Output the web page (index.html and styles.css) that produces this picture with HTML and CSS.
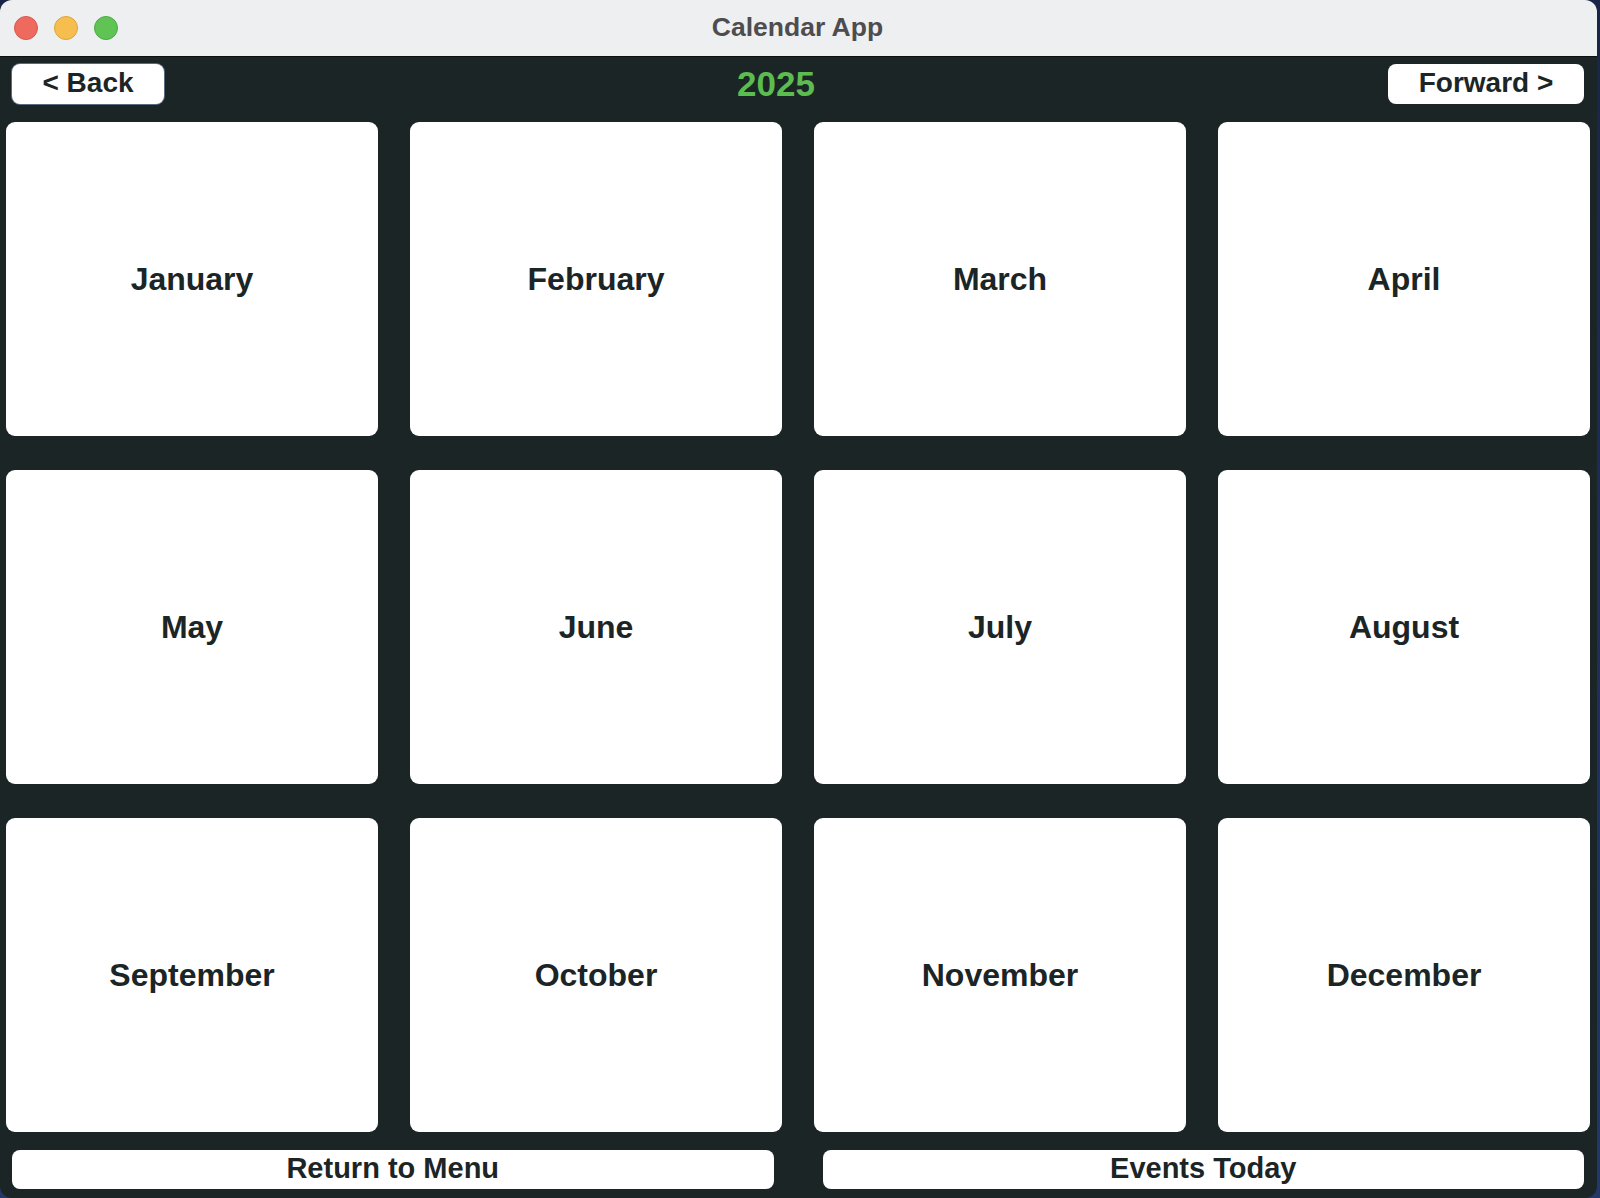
FILE: index.html
```html
<!DOCTYPE html>
<html lang="en">
<head>
<meta charset="utf-8">
<title>Calendar App</title>
<link rel="stylesheet" href="styles.css">
</head>
<body>
<div class="window">
  <div class="titlebar">
    <div class="lights">
      <span class="light red"></span>
      <span class="light yellow"></span>
      <span class="light green"></span>
    </div>
    <div class="title">Calendar App</div>
  </div>
  <div class="content">
    <div class="toolbar">
      <button class="btn back">&lt; Back</button>
      <div class="year">2025</div>
      <button class="btn forward">Forward &gt;</button>
    </div>
    <div class="months">
      <div class="month">January</div>
      <div class="month">February</div>
      <div class="month">March</div>
      <div class="month">April</div>
      <div class="month">May</div>
      <div class="month">June</div>
      <div class="month">July</div>
      <div class="month">August</div>
      <div class="month">September</div>
      <div class="month">October</div>
      <div class="month">November</div>
      <div class="month">December</div>
    </div>
    <div class="footer">
      <button class="btn wide">Return to Menu</button>
      <button class="btn wide">Events Today</button>
    </div>
  </div>
</div>
</body>
</html>
```

FILE: styles.css
```css
html, body {
  margin: 0;
  padding: 0;
}
body {
  width: 1600px;
  height: 1198px;
  background: linear-gradient(180deg, #1a2446 0%, #22386a 100%);
  font-family: "Liberation Sans", Arial, sans-serif;
  overflow: hidden;
}
.window {
  width: 1597px;
  height: 1198px;
  border-radius: 12px;
  overflow: hidden;
  background: #1c2526;
  display: flex;
  flex-direction: column;
}
.titlebar {
  height: 56px;
  flex: 0 0 56px;
  background: #eeeff1;
  border-bottom: 1px solid #0c1011;
  position: relative;
  display: flex;
  align-items: center;
  justify-content: center;
}
.lights {
  position: absolute;
  left: 14px;
  top: 16px;
  display: flex;
  gap: 16px;
}
.light {
  width: 24px;
  height: 24px;
  border-radius: 50%;
  box-sizing: border-box;
}
.red { background: #ee6a5f; border: 1px solid #d9574d; }
.yellow { background: #f6be4f; border: 1px solid #dea43a; }
.green { background: #5fc454; border: 1px solid #4caa42; }
.title {
  font-size: 26.5px;
  font-weight: bold;
  color: #4d4d50;
  margin-left: -2px;
  margin-top: -1px;
}
.content {
  flex: 1;
  display: flex;
  flex-direction: column;
  padding: 7px 7px 9px 6px;
}
.toolbar {
  display: flex;
  align-items: center;
  height: 40px;
  padding: 0 6px 0 6px;
}
.btn {
  font-family: "Liberation Sans", Arial, sans-serif;
  font-weight: bold;
  font-size: 28px;
  color: #1c2526;
  background: #ffffff;
  border: none;
  border-radius: 8px;
  height: 40px;
  padding: 0 0 2px 0;
  margin: 0;
  line-height: 38px;
}
.back {
  width: 152px;
  box-shadow: 0 0 0 1px #5a6a82;
}
.forward {
  width: 196px;
}
.year {
  flex: 1;
  text-align: center;
  color: #5bbd4f;
  font-size: 35px;
  font-weight: bold;
  margin-top: -1px;
}
.months {
  margin-top: 18px;
  display: grid;
  grid-template-columns: repeat(4, 372px);
  grid-template-rows: repeat(3, 314px);
  column-gap: 32px;
  row-gap: 34px;
}
.month {
  background: #ffffff;
  border-radius: 9px;
  display: flex;
  align-items: center;
  justify-content: center;
  font-size: 32px;
  font-weight: bold;
  color: #1c2526;
}
.footer {
  margin-top: 18px;
  display: flex;
  gap: 49px;
  padding: 0 6px;
}
.wide {
  flex: 1;
  height: 39px;
  line-height: 37px;
  font-size: 29px;
}
```
